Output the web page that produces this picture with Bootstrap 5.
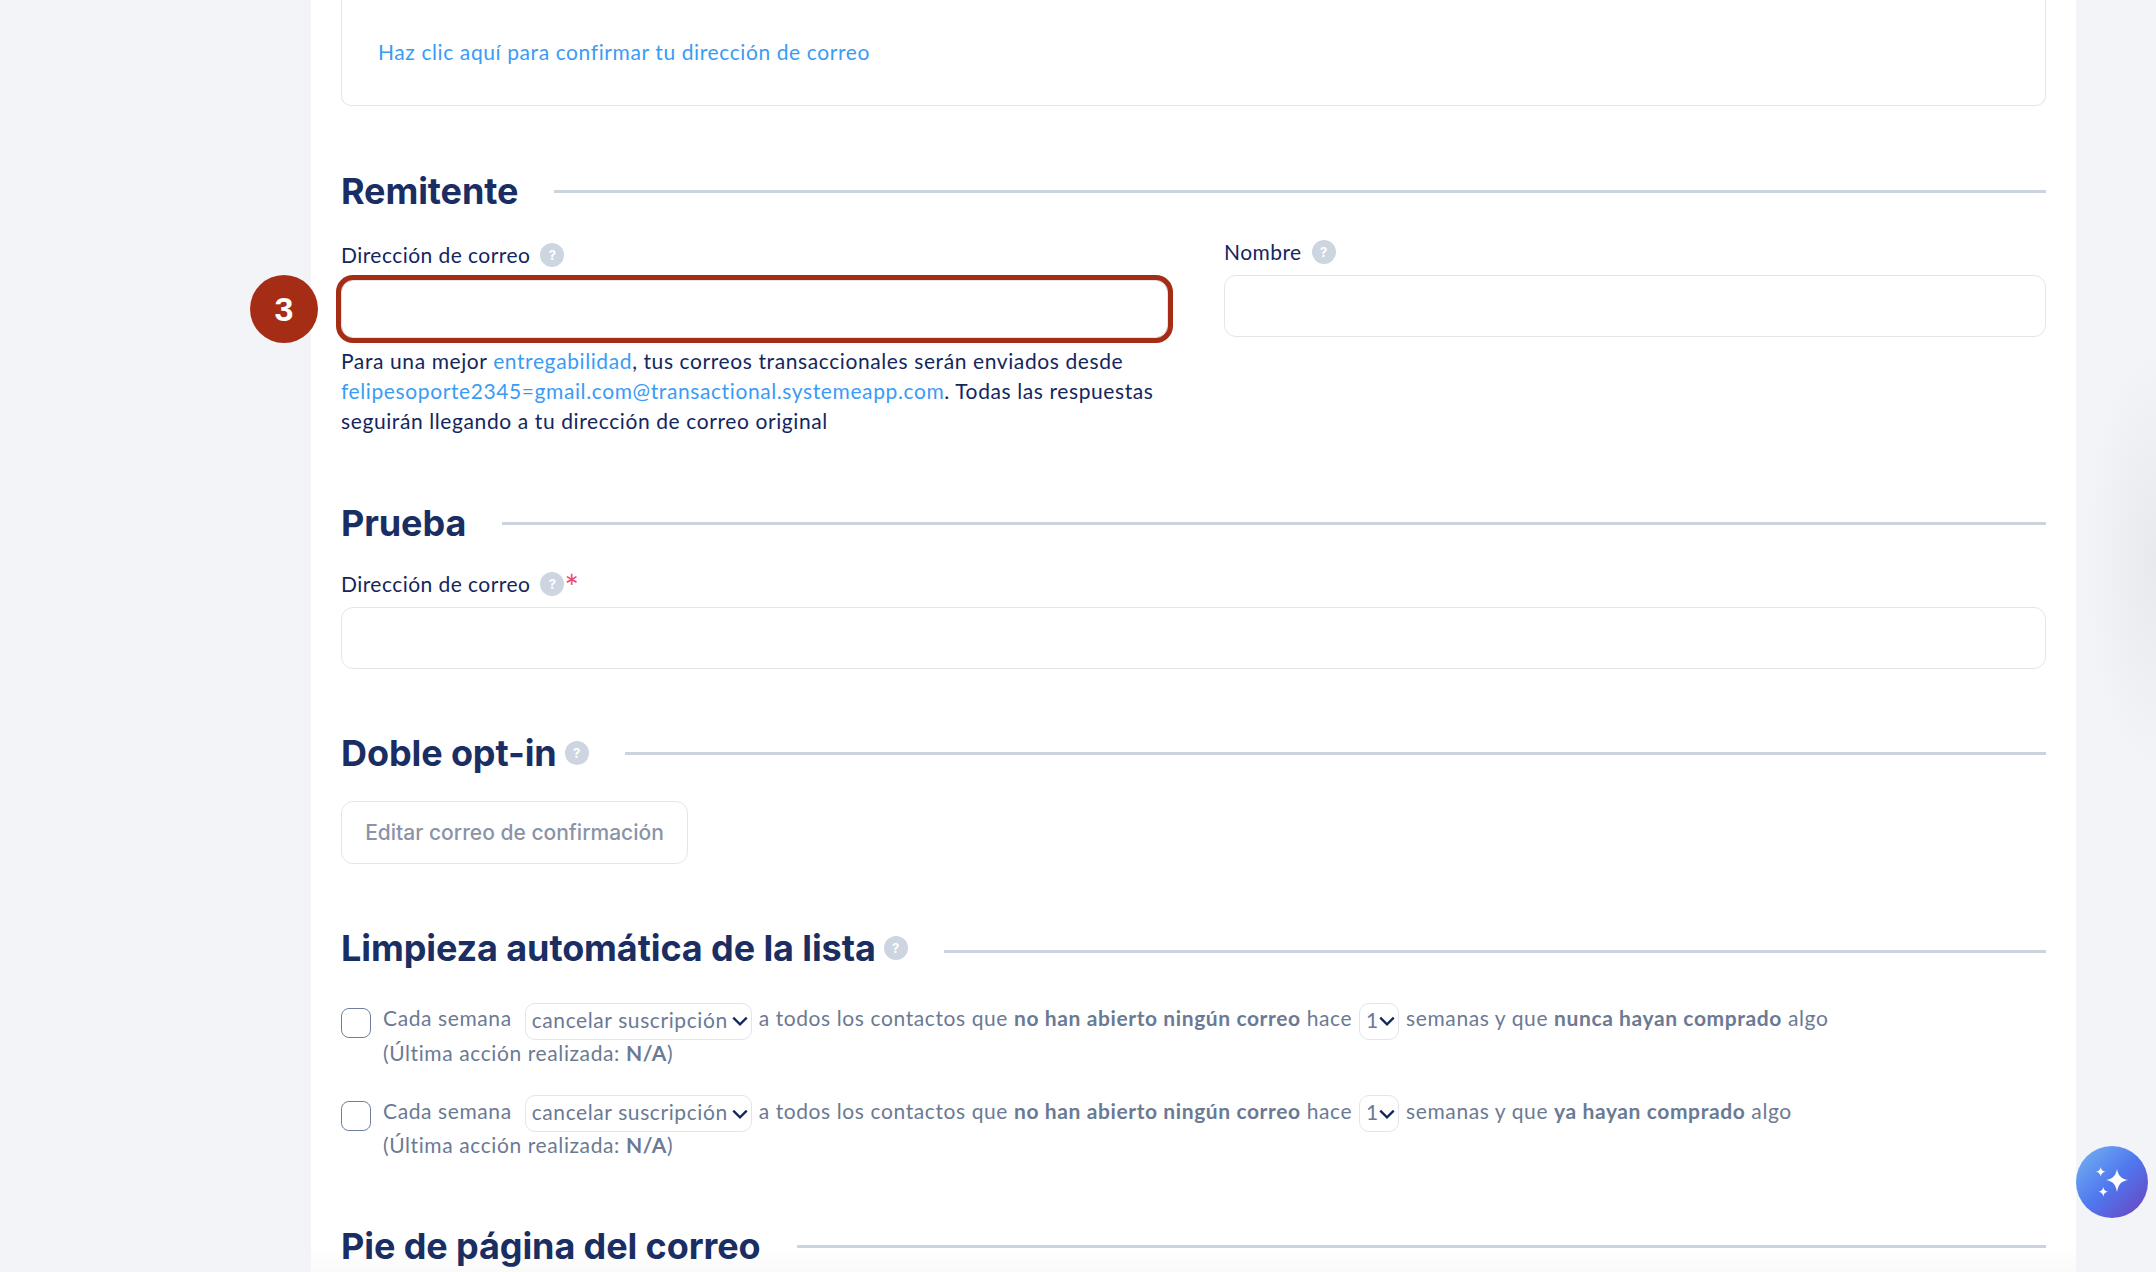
<!DOCTYPE html>
<html lang="es">

<head>
    <meta charset="UTF-8">
    <meta name="viewport" content="width=device-width, initial-scale=1.0">
    <link href="https://cdn.jsdelivr.net/npm/bootstrap@5.3.3/dist/css/bootstrap.min.css" rel="stylesheet">
    <title>Ajustes de correo</title>

    <style>
        body {
            height: 1272px;
            overflow: hidden;
            font-family: Lato, "Liberation Sans", sans-serif;
            font-size: 21px;
            letter-spacing: .6px;
            color: #14265e;
            background: radial-gradient(ellipse 70px 210px at 100% 560px, #e7e9ed, transparent), #f2f4f8;
        }

        .pane {
            margin-left: 311px;
            width: 1765px;
            height: 1272px;
            padding: 0 30px;
            background: linear-gradient(to bottom, #fff 1246px, #fafafa 1272px);
        }

        .confirm-box {
            height: 106px;
            padding: 38px 36px 0;
            border: 1px solid #e2e5ea;
            border-top: 0;
            border-radius: 0 0 10px 10px;
            line-height: 28px;
        }

        a {
            color: #3a9bf5;
            text-decoration: none;
        }

        .sec-head {
            height: 40px;
            font-family: Inter, "Liberation Sans", sans-serif;
            font-size: 36px;
            font-weight: 700;
            color: #1a2e63;
            letter-spacing: -.1px;
        }

        .sec-head h2 {
            font: inherit;
            margin: 0;
        }

        .sec-line {
            height: 3px;
            margin-left: 36px;
            background: #cbd3df;
        }

        .help-dot {
            flex: none;
            display: inline-block;
            width: 24px;
            height: 24px;
            border-radius: 50%;
            background: #cdd5e1;
            color: #fff;
            font-family: Inter, "Liberation Sans", sans-serif;
            font-size: 13px;
            font-weight: 700;
            letter-spacing: 0;
            line-height: 24px;
            text-align: center;
        }

        .field-label {
            height: 26px;
            line-height: 26px;
            letter-spacing: .45px;
            gap: 10px;
        }

        .form-control.plain-input {
            border: 1px solid #e2e5ea;
            border-radius: 12px;
        }

        .marked-input {
            box-shadow: 0 0 0 5px #a52c15;
        }

        .hint-text {
            line-height: 30px;
        }

        .step-dot {
            position: absolute;
            left: -91px;
            top: -5px;
            width: 68px;
            height: 68px;
            border-radius: 50%;
            background: #a52c15;
            color: #fff;
            font-family: "Liberation Sans", sans-serif;
            font-size: 34px;
            font-weight: 700;
            letter-spacing: 0;
            line-height: 68px;
            text-align: center;
        }

        .req-star {
            margin: -1px 0 0 -10px;
            color: #f0466e;
            font-size: 34px;
            line-height: 34px;
            align-self: flex-start;
        }

        .btn.ghost-btn {
            width: 347px;
            height: 63px;
            padding: 0;
            border: 1px solid #e2e5ea;
            border-radius: 12px;
            color: #8a93a8;
            font-family: Inter, "Liberation Sans", sans-serif;
            font-size: 21px;
            font-weight: 500;
            letter-spacing: 0;
        }

        .clean-row {
            color: #6b7a94;
            line-height: 34px;
        }

        .clean-row b {
            font-weight: 700;
        }

        .form-check-input.clean-check {
            flex: none;
            width: 30px;
            height: 30px;
            margin: 7px 12px 0 0;
            border: 1px solid #6f7f9f;
            border-radius: 8px;
        }

        .form-select.mini-select {
            display: inline-block;
            width: auto;
            height: 37px;
            margin: -3px 1px -4px;
            padding: 0 22px 3px 6px;
            border: 1px solid #e2e5ea;
            border-radius: 10px;
            color: #6b7a94;
            font-size: 21px;
            letter-spacing: .6px;
            line-height: 30px;
            vertical-align: middle;
            background-image: url("data:image/svg+xml,%3csvg xmlns='http://www.w3.org/2000/svg' viewBox='0 0 16 16'%3e%3cpath fill='none' stroke='%2314265e' stroke-width='2' d='M2 5l6 6 6-6'/%3e%3c/svg%3e");
            background-position: right 2px center;
            background-size: 18px 18px;
        }

        .form-select.mini-select.action-select {
            margin-left: 7px;
        }

        .form-select.mini-select.num-select {
            padding-right: 19px;
        }

        .ai-btn {
            position: fixed;
            left: 2076px;
            top: 1146px;
            width: 72px;
            height: 72px;
            padding: 0;
            border: 0;
            border-radius: 50%;
            background: linear-gradient(135deg, #72b0f0 5%, #4f78ee 50%, #6a45c4 95%);
        }
    </style>

</head>

<body>
    <main class="pane">
        <div class="confirm-box">
            <a href="#">Haz clic aquí para confirmar tu dirección de correo</a>
        </div>

        <section style="margin-top:65px">
            <div class="sec-head d-flex align-items-center">
                <h2>Remitente</h2>
                <div class="sec-line flex-grow-1"></div>
            </div>
            <div class="d-flex justify-content-between" style="margin-top:31px">
                <div>
                    <div class="field-label d-flex align-items-center">Dirección de correo <span class="help-dot">?</span></div>
                    <div class="position-relative" style="margin-top:12px">
                        <span class="step-dot">3</span>
                        <input type="text" class="form-control plain-input marked-input" style="width:827px;height:58px">
                    </div>
                    <p class="hint-text mb-0" style="width:827px;margin-top:8px">Para una mejor <a href="#">entregabilidad</a>, tus correos transaccionales serán enviados desde <a href="#">felipesoporte2345=gmail.com@transactional.systemeapp.com</a>. Todas las respuestas seguirán llegando a tu dirección de correo original</p>
                </div>
                <div style="width:822px;margin-top:-3px">
                    <div class="field-label d-flex align-items-center">Nombre <span class="help-dot">?</span></div>
                    <input type="text" class="form-control plain-input" style="height:62px;margin-top:10px">
                </div>
            </div>
        </section>

        <section style="margin-top:67px">
            <div class="sec-head d-flex align-items-center">
                <h2>Prueba</h2>
                <div class="sec-line flex-grow-1"></div>
            </div>
            <div class="field-label d-flex align-items-center" style="margin-top:28px">Dirección de correo <span class="help-dot">?</span><span class="req-star">*</span></div>
            <input type="text" class="form-control plain-input" style="height:62px;margin-top:10px">
        </section>

        <section style="margin-top:64px">
            <div class="sec-head d-flex align-items-center">
                <h2>Doble opt-in</h2>
                <span class="help-dot ms-2">?</span>
                <div class="sec-line flex-grow-1"></div>
            </div>
            <button type="button" class="btn ghost-btn" style="margin-top:28px">Editar correo de confirmación</button>
        </section>

        <section style="margin-top:64px">
            <div class="sec-head d-flex align-items-center">
                <h2>Limpieza automática de la lista</h2>
                <span class="help-dot ms-2">?</span>
                <div class="sec-line flex-grow-1" style="margin-top:6px"></div>
            </div>
            <div class="clean-row d-flex" style="margin-top:33px">
                <input type="checkbox" class="form-check-input clean-check">
                <div>Cada semana
                    <select class="form-select mini-select action-select"><option>cancelar suscripción</option></select>
                    a todos los contactos que <b>no han abierto ningún correo</b> hace
                    <select class="form-select mini-select num-select"><option>1</option></select>
                    semanas y que <b>nunca hayan comprado</b> algo<br>(Última acción realizada: <b>N/A</b>)
                </div>
            </div>
            <div class="clean-row d-flex" style="margin-top:24px">
                <input type="checkbox" class="form-check-input clean-check">
                <div>Cada semana
                    <select class="form-select mini-select action-select"><option>cancelar suscripción</option></select>
                    a todos los contactos que <b>no han abierto ningún correo</b> hace
                    <select class="form-select mini-select num-select"><option>1</option></select>
                    semanas y que <b>ya hayan comprado</b> algo<br>(Última acción realizada: <b>N/A</b>)
                </div>
            </div>
        </section>

        <section style="margin-top:64px">
            <div class="sec-head d-flex align-items-center">
                <h2>Pie de página del correo</h2>
                <div class="sec-line flex-grow-1"></div>
            </div>
        </section>
    </main>

    <button type="button" class="ai-btn" aria-label="Asistente">
        <svg width="72" height="72" viewBox="0 0 72 72" class="d-block">
            <path fill="#fff" d="M41 23C42.500 30 45 32.500 52 34 45 35.500 42.500 38 41 46 39.500 38 37 35.500 30 34 37 32.500 39.500 30 41 23Z"/>
            <path fill="#fff" d="M24.700 21C25.300 24 26.500 25.200 29.500 25.700 26.500 26.200 25.300 27.400 24.700 30.500 24.100 27.400 22.900 26.200 20 25.700 22.900 25.200 24.100 24 24.700 21Z"/>
            <path fill="#fff" d="M27.300 41C27.900 44 29.100 45.200 32 45.700 29.100 46.200 27.900 47.400 27.300 50.500 26.700 47.400 25.500 46.200 22.500 45.700 25.500 45.200 26.700 44 27.300 41Z"/>
        </svg>
    </button>

    <script src="https://cdn.jsdelivr.net/npm/bootstrap@5.3.3/dist/js/bootstrap.bundle.min.js"></script>
</body>

</html>
